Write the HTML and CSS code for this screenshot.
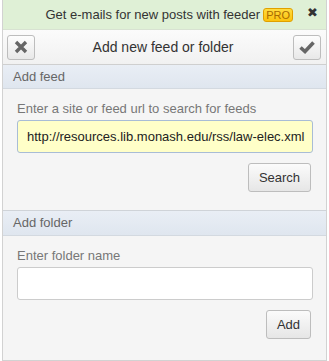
FILE: index.html
```html
<!DOCTYPE html>
<html>
<head>
<meta charset="utf-8">
<link rel="stylesheet" href="styles.css">
</head>
<body>
<div class="panel">
  <div class="promo">
    <span class="promo-text">Get e-mails for new posts with feeder</span>
    <span class="pro">PRO</span>
    <span class="promo-close">&#x2716;</span>
  </div>
  <div class="header">
    <button class="icon-btn" type="button">
      <svg width="14" height="14" viewBox="0 0 14 14"><path d="M2 2 L12 12 M12 2 L2 12" stroke="#666" stroke-width="3.4" stroke-linecap="butt"/></svg>
    </button>
    <div class="title">Add new feed or folder</div>
    <button class="icon-btn" type="button">
      <svg width="16" height="14" viewBox="0 0 16 14"><path d="M1.5 7.5 L6 11.5 L14.5 2.5" fill="none" stroke="#666" stroke-width="3.6" stroke-linejoin="miter"/></svg>
    </button>
  </div>
  <div class="section-head">Add feed</div>
  <div class="section-body">
    <label class="label">Enter a site or feed url to search for feeds</label>
    <input class="field field-active" type="text" value="http://resources.lib.monash.edu/rss/law-elec.xml">
    <div class="actions"><button class="btn" type="button">Search</button></div>
  </div>
  <div class="section-head section-head-divided">Add folder</div>
  <div class="section-body section-last">
    <label class="label">Enter folder name</label>
    <input class="field" type="text" value="">
    <div class="actions"><button class="btn btn-add" type="button">Add</button></div>
  </div>
</div>
</body>
</html>
```
FILE: styles.css
```css
html, body {
  margin: 0;
  padding: 0;
  background: #ffffff;
}
body {
  font-family: "Liberation Sans", Arial, sans-serif;
  font-size: 13px;
  color: #333;
}
.panel {
  margin-left: 2px;
  width: 323px;
  border: 1px solid #d2d2d2;
  border-top: none;
  display: flex;
  flex-direction: column;
  background: #f5f5f5;
}
.promo {
  height: 30px;
  background: #dff0d6;
  display: flex;
  align-items: center;
  justify-content: flex-end;
  padding-right: 8px;
  border-bottom: 1px solid #d8e2d2;
  box-sizing: border-box;
}
.promo-text {
  color: #333;
  font-size: 13px;
}
.pro {
  margin-left: 3px;
  background: linear-gradient(#ffdc40, #fbc20e);
  border: 1px solid #e0a000;
  border-radius: 3px;
  color: #a86a00;
  font-size: 11px;
  line-height: 12px;
  height: 12px;
  width: 28px;
  text-align: center;
}
.promo-close {
  margin-left: 14px;
  font-size: 13px;
  color: #333;
  font-family: "DejaVu Sans", sans-serif;
  font-weight: bold;
  position: relative;
  top: -2px;
}
.header {
  height: 35px;
  box-sizing: border-box;
  background: linear-gradient(#fbfbfb, #f1f1f1);
  border-bottom: 1px solid #cfcfcf;
  display: flex;
  align-items: center;
  padding: 0 5px 0 4px;
}
.icon-btn {
  width: 28px;
  height: 25px;
  margin: 0;
  padding: 0;
  border: 1px solid #bdbdbd;
  border-radius: 3px;
  background: linear-gradient(#fdfdfd, #e8e8e8);
  display: flex;
  align-items: center;
  justify-content: center;
}
.title {
  flex: 1;
  text-align: center;
  font-size: 14px;
  color: #333;
  padding-right: 2px;
}
.section-head {
  height: 24px;
  box-sizing: border-box;
  background: linear-gradient(#e9eef5, #dfe6ef);
  border-bottom: 1px solid #d3d9e0;
  color: #666;
  font-size: 13px;
  line-height: 23px;
  padding-left: 10px;
}
.section-head-divided {
  border-top: 1px solid #cfd3d8;
  height: 26px;
  line-height: 24px;
}
.section-body {
  display: flex;
  flex-direction: column;
  padding: 11px 13px 18px 14px;
}
.section-last {
  padding-bottom: 21px;
}
.label {
  color: #777;
  font-size: 13px;
  line-height: 18px;
  margin-bottom: 2px;
}
.field {
  height: 33px;
  box-sizing: border-box;
  border: 1px solid #cccccc;
  border-radius: 3px;
  background: #ffffff;
  font-family: "Liberation Sans", Arial, sans-serif;
  font-size: 13px;
  color: #222;
  padding: 0 1px 0 9px;
  margin: 0;
  outline: none;
  width: 100%;
}
.field-active {
  background: #ffffc8;
  border-color: #a8bcd6;
}
.actions {
  display: flex;
  justify-content: flex-end;
  margin-top: 10px;
  padding-right: 2px;
}
.btn {
  height: 29px;
  padding: 0 9px;
  margin: 0;
  border: 1px solid #bdbdbd;
  border-radius: 3px;
  background: linear-gradient(#fbfbfb, #e6e6e6);
  font-family: "Liberation Sans", Arial, sans-serif;
  font-size: 13px;
  color: #333;
  width: 63px;
}
.btn-add {
  width: 45px;
}
```
